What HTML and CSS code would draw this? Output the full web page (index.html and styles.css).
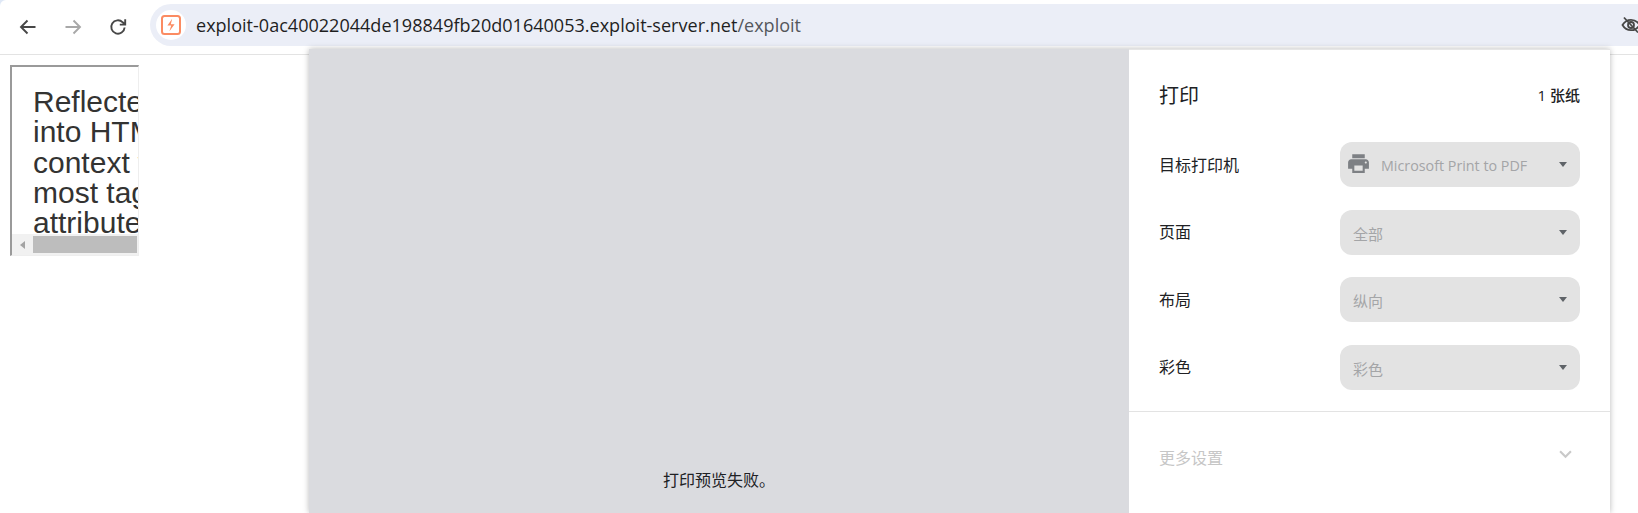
FILE: index.html
```html
<!DOCTYPE html>
<html lang="zh-CN">
<head>
    <meta charset="UTF-8">
    <meta name="viewport" content="width=device-width, initial-scale=1.0">
    <title>打印</title>
    <link rel="stylesheet" href="styles.css">
</head>
<body>
    <!-- Browser toolbar -->
    <div class="toolbar">
        <svg class="nav-icon nav-back" viewBox="0 0 20 20"><path d="M17.5 10H3.5M9.5 3.5L3 10l6.5 6.5"/></svg>
        <svg class="nav-icon nav-forward" viewBox="0 0 20 20"><path d="M2.5 10h14M10.5 3.5L17 10l-6.5 6.5"/></svg>
        <svg class="nav-icon nav-reload" viewBox="0 0 20 20"><path d="M16.6 10.5a6.7 6.7 0 1 1-1.9-5.2L17 7.4M17.2 2.2v5.4h-5.4"/></svg>
        <div class="omnibox">
            <span class="favicon">
                <svg viewBox="0 0 20 20" width="20" height="20">
                    <rect x="1" y="1" width="18" height="18" rx="2.5" fill="#fff" stroke="#fb8b62" stroke-width="2"/>
                    <path d="M11.2 3.800L6.400 10.600h3.800L8.400 16.200l5.200-7H9.800z" fill="#fb8b62"/>
                </svg>
            </span>
            <span class="url">exploit-0ac40022044de198849fb20d01640053.exploit-server.net<span class="url-path">/exploit</span></span>
            <svg class="eye-off" viewBox="0 0 20 20"><path d="M1.5 10C3.5 6.5 6.500 4.800 10 4.800s6.500 1.700 8.500 5.200c-2 3.500-5 5.200-8.500 5.200S3.500 13.500 1.500 10z"/><circle cx="10" cy="10" r="3"/><path d="M3 2.500l14 15"/></svg>
        </div>
    </div>

    <!-- Page behind the dialog -->
    <div class="page">
        <div class="frame">
            <div class="frame-view">
                <div class="frame-title">Reflected XSS<br>into HTML<br>context with<br>most tags and<br>attributes blocked</div>
            </div>
            <div class="hscroll">
                <span class="hscroll-arrow"></span>
                <span class="hscroll-thumb"></span>
            </div>
        </div>
    </div>

    <!-- Print dialog -->
    <div class="print-dialog">
        <div class="preview">
            <div class="preview-msg">打印预览失败。</div>
        </div>
        <div class="sidebar">
            <div class="side-head">
                <span class="side-title">打印</span>
                <span class="sheet-count">1 张纸</span>
            </div>
            <div class="settings">
                <div class="setting">
                    <span class="setting-label">目标打印机</span>
                    <div class="select">
                        <svg class="printer" viewBox="0 0 24 24"><path d="M19 8H5c-1.660 0-3 1.340-3 3v6h4v4h12v-4h4v-6c0-1.660-1.340-3-3-3zm-3 11H8v-5h8v5zm3-7c-.550 0-1-.450-1-1s.450-1 1-1 1 .450 1 1-.450 1-1 1zm-1-9H6v4h12V3z"/></svg>
                        <span class="select-text select-latin">Microsoft Print to PDF</span>
                        <span class="caret"></span>
                    </div>
                </div>
                <div class="setting">
                    <span class="setting-label">页面</span>
                    <div class="select"><span class="select-text">全部</span><span class="caret"></span></div>
                </div>
                <div class="setting">
                    <span class="setting-label">布局</span>
                    <div class="select"><span class="select-text">纵向</span><span class="caret"></span></div>
                </div>
                <div class="setting">
                    <span class="setting-label">彩色</span>
                    <div class="select"><span class="select-text">彩色</span><span class="caret"></span></div>
                </div>
            </div>
            <div class="more">
                <span>更多设置</span>
                <svg class="chevron" viewBox="0 0 12 8"><path d="M1 1l5 5 5-5"/></svg>
            </div>
        </div>
    </div>
</body>
</html>
```

FILE: styles.css
```css
html, body {
    margin: 0;
    height: 100%;
    overflow: hidden;
}

body {
    background-color: #fff;
    font-family: "Open Sans", "Noto Sans CJK SC", sans-serif;
    color: #1f1f1f;
}

/* Toolbar */
.toolbar {
    height: 54px;
    box-sizing: content-box;
    display: flex;
    align-items: center;
    padding-left: 18px;
    border-bottom: 1px solid #e3e3e3;
    border-top-left-radius: 6px;
    box-shadow: -2px -2px 0 #dfe8f6;
}

.nav-icon {
    width: 20px;
    height: 20px;
    margin-right: 25px;
    flex: none;
    fill: none;
    stroke: #474747;
    stroke-width: 1.9;
}

.nav-forward {
    stroke: #a8a8a8;
}

.nav-reload {
    margin-right: 22px;
}

.omnibox {
    flex: 1;
    height: 42px;
    margin-top: 4px;
    margin-right: -6px;
    padding-left: 6px;
    display: flex;
    align-items: center;
    align-self: flex-start;
    position: relative;
    background-color: #ebeef7;
    border-radius: 21px 0 0 21px;
}

.favicon {
    width: 30px;
    height: 30px;
    flex: none;
    display: flex;
    align-items: center;
    justify-content: center;
    border-radius: 50%;
    background-color: #fff;
}

.url {
    margin-left: 10px;
    font-family: "Open Sans", sans-serif;
    font-size: 18.060px;
    color: #1f1f1f;
    white-space: nowrap;
}

.url-path {
    color: #54575c;
}

.eye-off {
    width: 20px;
    height: 20px;
    position: absolute;
    left: 1471px;
    top: 11px;
    fill: none;
    stroke: #474747;
    stroke-width: 1.8;
}

/* Page behind the dialog */
.page {
    padding: 10px 0 0 10px;
}

.frame {
    width: 129px;
    height: 191px;
    box-sizing: border-box;
    display: flex;
    flex-direction: column;
    border-style: solid;
    border-width: 2px 1px 1px 2px;
    border-color: #9a9a9a #eeeeee #eeeeee #9a9a9a;
}

.frame-view {
    flex: 1;
    min-height: 0;
    overflow: hidden;
    padding: 20px 0 0 21px;
}

.frame-title {
    font-family: "Liberation Sans", sans-serif;
    font-size: 30px;
    line-height: 30.300px;
    color: #333332;
    white-space: nowrap;
}

.hscroll {
    height: 21px;
    flex: none;
    display: flex;
    align-items: center;
    background-color: #f1f1f1;
}

.hscroll-arrow {
    width: 0;
    height: 0;
    margin-left: 8px;
    border-style: solid;
    border-width: 4.500px 5px 4.500px 0;
    border-color: transparent #a3a3a3 transparent transparent;
}

.hscroll-thumb {
    height: 17px;
    flex: 1;
    margin-left: 8px;
    margin-right: 1px;
    background-color: #bdbdbd;
}

/* Print dialog */
.print-dialog {
    position: absolute;
    top: 49px;
    left: 309px;
    width: 1301px;
    bottom: 0;
    display: flex;
    box-shadow: 0 0 6px rgba(0, 0, 0, 0.28);
}

.preview {
    flex: 1;
    background-color: #dadbdf;
    display: flex;
    align-items: flex-end;
    justify-content: center;
}

.preview-msg {
    margin-bottom: 21px;
    font-size: 16px;
    line-height: 24px;
    color: #202124;
}

.sidebar {
    width: 481px;
    flex: none;
    box-sizing: border-box;
    background-color: #fff;
    border-top: 1px solid #e6e6e6;
    display: flex;
    flex-direction: column;
}

.side-head {
    display: flex;
    justify-content: space-between;
    align-items: center;
    padding: 27px 30px 2px 30px;
    height: 34px;
}

.side-title {
    font-size: 20px;
    color: #202124;
}

.sheet-count {
    font-size: 15px;
    font-weight: 500;
    color: #202124;
}

.settings {
    padding: 29px 30px 21px 30px;
    display: flex;
    flex-direction: column;
    gap: 22.670px;
    border-bottom: 1px solid #e3e3e3;
}

.setting {
    display: flex;
    justify-content: space-between;
    align-items: center;
}

.setting-label {
    padding-bottom: 2px;
    font-size: 16px;
    color: #202124;
}

.select {
    width: 240px;
    height: 45px;
    box-sizing: border-box;
    padding: 0 13px 0 13px;
    display: flex;
    align-items: center;
    background-color: #e3e3e3;
    border-radius: 12px;
}

.printer {
    width: 25px;
    height: 25px;
    margin: -2px 8px 0 -7px;
    fill: #7d8084;
}

.select-text {
    flex: 1;
    padding-top: 2px;
    font-size: 15px;
    color: #a4a5a7;
}

.select-latin {
    font-size: 14.300px;
    margin-left: 2px;
}

.caret {
    width: 0;
    height: 0;
    border-style: solid;
    border-width: 5px 4.500px 0 4.500px;
    border-color: #5f6368 transparent transparent transparent;
}

.more {
    padding: 33px 38px 0 30px;
    display: flex;
    justify-content: space-between;
    align-items: center;
    font-size: 16px;
    color: #c6c6c6;
}

.chevron {
    width: 13px;
    height: 9px;
    margin-top: -4px;
    fill: none;
    stroke: #c9c9c9;
    stroke-width: 2;
}
```
